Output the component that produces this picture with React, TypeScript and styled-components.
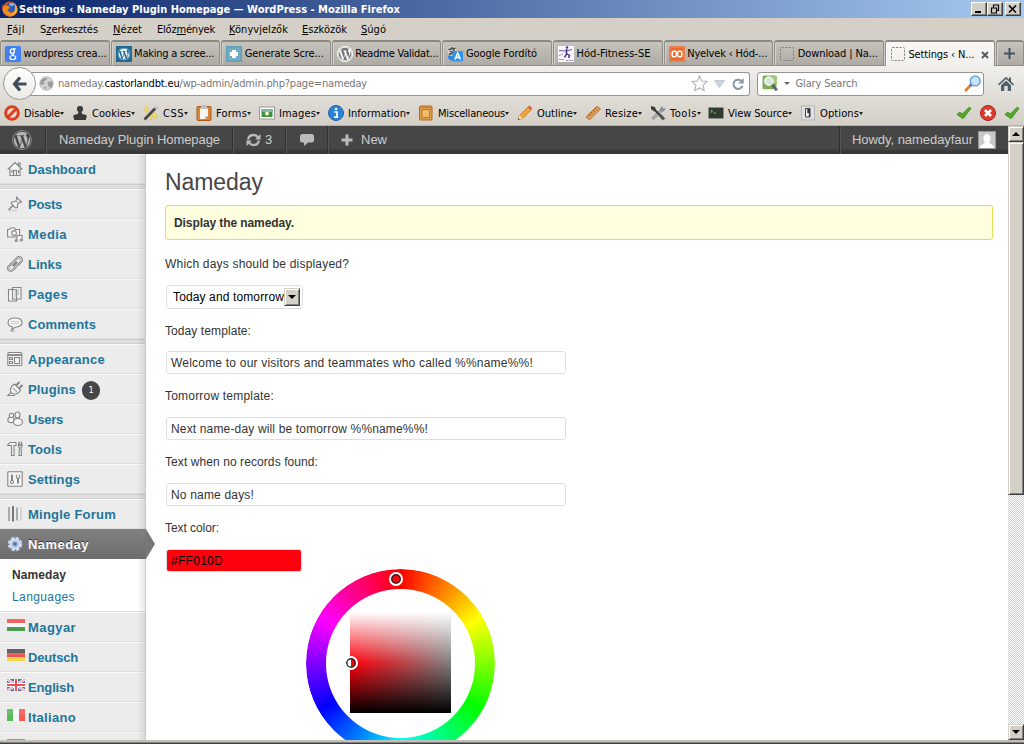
import React, { useLayoutEffect, useRef, useState } from 'react';
import styled, { createGlobalStyle, css } from 'styled-components';
import { FaWordpress } from 'react-icons/fa';

const UI = `Tahoma, "DejaVu Sans Condensed", "DejaVu Sans", sans-serif`;
const ARIAL = `Arial, "Liberation Sans", sans-serif`;

const Global = createGlobalStyle`
  * { box-sizing: border-box; }
  html, body { margin: 0; padding: 0; overflow: hidden; }
  body { font-family: ${ARIAL}; font-size: 12px; color: #333; }
  svg { display: block; flex: none; }
`;

/* ---------- text that spreads its letters over a given width ---------- */

const FitSpan = styled.span`
  display: inline-block;
  white-space: pre;
  flex: none;
`;

function Fit({ w, children }: { w: number; children: React.ReactNode }) {
  const ref = useRef<HTMLSpanElement>(null);
  const [spacing, setSpacing] = useState(0);
  useLayoutEffect(() => {
    const el = ref.current;
    if (!el) return;
    const count = (el.textContent || '').length;
    if (count > 1) setSpacing((w - el.getBoundingClientRect().width) / count);
  }, [w]);
  return (
    <FitSpan ref={ref} style={{ letterSpacing: `${spacing}px` }}>
      {children}
    </FitSpan>
  );
}

/* ---------- window chrome ---------- */

const Window = styled.div`
  width: 1024px;
  height: 744px;
  display: flex;
  flex-direction: column;
  overflow: hidden;
  background: #d4d0c8;
`;

const TitleBar = styled.header`
  height: 18px;
  flex: none;
  display: flex;
  align-items: center;
  padding: 0 3px 0 2px;
  background: linear-gradient(90deg, #0a246a, #a6caf0);
  color: #fff;
  font: bold 11px/18px ${UI};
`;

const TitleText = styled.div`
  flex: 1;
  padding: 1px 0 0 1px;
`;

const CaptionButton = styled.button<{ $gap?: number }>`
  width: 16px;
  height: 14px;
  margin: 0 0 0 ${(p) => p.$gap || 0}px;
  padding: 0;
  display: flex;
  align-items: center;
  justify-content: center;
  background: #d4d0c8;
  border: 1px solid;
  border-color: #fff #404040 #404040 #fff;
  box-shadow: inset -1px -1px #808080;
`;

const MenuBar = styled.nav`
  height: 22px;
  flex: none;
  display: grid;
  grid-template-columns: 33px 73px 44px 72px 73px 59px 60px;
  padding-left: 7px;
  color: #000;
  font: 11px/23px ${UI};
`;

const TabStrip = styled.div`
  height: 26px;
  flex: none;
  display: grid;
  grid-template-columns: repeat(8, 110.62px) 111px 28px;
  border-bottom: 1px solid #918f8b;
`;

const Tab = styled.div<{ $active?: boolean }>`
  height: ${(p) => (p.$active ? 26 : 25)}px;
  margin-right: 1px;
  padding-left: 4px;
  display: flex;
  align-items: center;
  gap: 2.5px;
  overflow: hidden;
  font: 11px/24px ${UI};
  color: #000;
  border: 1px solid #8f8d88;
  border-top: 2px solid #8b8984;
  border-bottom: 0;
  border-radius: 3px 3px 0 0;
  background: ${(p) => (p.$active ? 'linear-gradient(#f8f7f5, #f0efec)' : 'linear-gradient(#c6c3bd, #aeaba5)')};
  box-shadow: inset 1px 0 ${(p) => (p.$active ? '#fff' : '#d6d3cd')};
  & > span { padding-top: 1px; }
`;

const TabClose = styled.span`
  margin-left: 4px;
`;

const NewTab = styled(Tab)`
  justify-content: center;
  padding: 0;
  margin: 0;
`;

const NavBar = styled.div`
  height: 35px;
  flex: none;
  display: flex;
  align-items: center;
  padding: 0 10px 0 3px;
  background: linear-gradient(#f0efec, #dedbd5);
`;

const BackButton = styled.div`
  width: 33px;
  height: 33px;
  z-index: 1;
  display: flex;
  align-items: center;
  justify-content: center;
  flex: none;
  border: 1px solid #96948f;
  border-radius: 50%;
  background: linear-gradient(#fff, #eceae6);
`;

const Field = styled.div`
  height: 24px;
  display: flex;
  align-items: center;
  border: 1px solid #95938f;
  border-radius: 3px;
  background: #fff;
  font: 11px/22px ${UI};
  color: #777;
  & > span { padding-top: 1px; }
`;

const UrlField = styled(Field)`
  width: 726px;
  margin-left: -10px;
  padding: 0 4px 0 13px;
  gap: 4px;
  border-left: 0;
  b { font-weight: 400; color: #000; }
`;

const UrlTools = styled.div`
  margin-left: auto;
  display: flex;
  align-items: center;
  gap: 6px;
`;

const SearchField = styled(Field)`
  width: 227px;
  margin: 0 14px 0 7px;
  padding: 0 2px 0 4px;
  gap: 5px;
  & > :last-child { margin-left: auto; }
`;

const EngineMark = styled.i`
  width: 0;
  height: 0;
  flex: none;
  border: 3px solid transparent;
  border-top: 3px solid #666;
  border-bottom: 0;
`;

const ToolBar = styled.div`
  height: 25px;
  flex: none;
  display: grid;
  grid-template-columns: 68px 71px 53px 63px 69px 90px 99px 68px 65px 58px 92px 156px 24px 24px 19px;
  padding-left: 4px;
  align-items: center;
  background: linear-gradient(#dedbd5, #d4d0c8);
  border-bottom: 1px solid #b4b1aa;
  font: 11px/22px ${UI};
  color: #000;
`;

const Tool = styled.div`
  display: flex;
  align-items: center;
  gap: 4px;
  & > span { padding-top: 2px; }
`;

const DropMark = styled.i`
  width: 0;
  height: 0;
  margin-left: -4px;
  flex: none;
  border: 2.5px solid transparent;
  border-top: 3px solid #222;
  border-bottom: 0;
`;

/* ---------- WordPress page ---------- */

const Viewport = styled.div`
  height: 614px;
  flex: none;
  display: flex;
`;

const Page = styled.div`
  width: 1008px;
  height: 614px;
  display: flex;
  flex-direction: column;
  overflow: hidden;
  background: #fff;
`;

const AdminBar = styled.div`
  height: 28px;
  flex: none;
  display: flex;
  font: 13px/28px ${ARIAL};
  color: #ccc;
  background: linear-gradient(#464646 0 80%, #373737 92%);
`;

const AdminItem = styled.div<{ $w: number; $right?: boolean }>`
  width: ${(p) => p.$w}px;
  display: flex;
  align-items: center;
  padding-left: 12px;
  ${(p) =>
    p.$right
      ? css`margin-left: auto; border-left: 1px solid #2e2e2e; box-shadow: inset 1px 0 #555; gap: 5px;`
      : css`border-right: 1px solid #555; box-shadow: inset -1px 0 #333; gap: 4px;`}
`;

const LastAdminItem = styled(AdminItem)`
  border: 0;
  box-shadow: none;
  gap: 8px;
`;

const Body = styled.div`
  flex: 1;
  min-height: 0;
  display: flex;
`;

const Sidebar = styled.nav`
  width: 146px;
  flex: none;
  display: flex;
  flex-direction: column;
  position: relative;
  background: #ececec;
  &::after {
    content: '';
    position: absolute;
    inset: 0 0 0 auto;
    width: 8px;
    border-right: 1px solid #c8c8c8;
    background: linear-gradient(90deg, transparent, rgba(0, 0, 0, 0.09));
  }
`;

const MenuItem = styled.div<{ $current?: boolean }>`
  height: 30px;
  flex: none;
  display: flex;
  align-items: center;
  padding-left: 7px;
  color: #21759b;
  font: bold 13px/28px ${ARIAL};
  border-top: 1px solid #f9f9f9;
  border-bottom: 1px solid #dfdfdf;
  ${(p) =>
    p.$current &&
    css`
      position: relative;
      z-index: 2;
      color: #fff;
      text-shadow: 0 -1px 0 #333;
      border-color: #808080 transparent #6d6d6d;
      background: linear-gradient(#808080, #6d6d6d);
      &::after {
        content: '';
        position: absolute;
        left: 146px;
        top: -1px;
        border: 15px solid transparent;
        border-width: 15px 0 15px 9px;
        border-left-color: #777;
      }
    `}
`;

const MenuName = styled.span`
  height: 28px;
  line-height: 30px;
`;

const MenuIcon = styled.span<{ $flag?: boolean }>`
  width: 21px;
  flex: none;
  ${(p) => p.$flag && css`padding-bottom: 4px;`}
`;

const Count = styled.span`
  width: 18px;
  height: 19px;
  margin: 2px 0 0 6px;
  border-radius: 10px;
  background: #464646;
  color: #fff;
  font: 9px/19px ${UI};
  text-align: center;
`;

const Separator = styled.div`
  height: 5px;
  flex: none;
  background: #dfdfdf;
  border-top: 1px solid #cfcfcf;
  border-bottom: 1px solid #d2d2d2;
`;

const SubMenu = styled.div`
  height: 53px;
  flex: none;
  padding: 5px 0 0 12px;
  background: #fff;
  border-bottom: 1px solid #dfdfdf;
  font: 12px/22px ${ARIAL};
  color: #21759b;
  b { color: #333; }
`;

const SubItem = styled.div`
  height: 22px;
`;

const Content = styled.main`
  flex: 1;
  min-width: 0;
  padding: 11px 15px 0 19px;
  display: flex;
  flex-direction: column;
  align-items: flex-start;
`;

const Heading = styled.h2`
  height: 34px;
  margin: 0 0 6px;
  font: 400 23px/34px ${ARIAL};
  color: #464646;
`;

const Notice = styled.div`
  align-self: stretch;
  height: 35px;
  padding-left: 8px;
  border: 1px solid #e6db55;
  border-radius: 3px;
  background: #ffffe0;
  font: bold 12px/34px ${ARIAL};
`;

const Label = styled.label<{ $h: number; $line: number }>`
  height: ${(p) => p.$h}px;
  line-height: ${(p) => p.$line}px;
`;

const Input = styled.div<{ $w: number; $bg?: string }>`
  width: ${(p) => p.$w}px;
  height: 23px;
  flex: none;
  margin-left: 1px;
  padding-left: 4px;
  border: 1px solid #dfdfdf;
  border-radius: 3px;
  background: ${(p) => p.$bg || '#fff'};
  color: ${(p) => (p.$bg ? '#000' : '#333')};
  line-height: 22px;
`;

const Select = styled(Input)`
  height: 24px;
  padding: 0 3px 0 6px;
  color: #000;
  display: flex;
  align-items: center;
  justify-content: space-between;
`;

const Bevel = styled.div<{ $h: number }>`
  width: 16px;
  height: ${(p) => p.$h}px;
  flex: none;
  display: flex;
  align-items: center;
  justify-content: center;
  background: #d4d0c8;
  border: 1px solid;
  border-color: #d4d0c8 #404040 #404040 #d4d0c8;
  box-shadow: inset 1px 1px #fff, inset -1px -1px #808080;
`;

const Caret = styled.i<{ $up?: boolean }>`
  width: 0;
  height: 0;
  border: 4px solid transparent;
  ${(p) => (p.$up ? css`border-top: 0; border-bottom-color: #000;` : css`border-bottom: 0; border-top-color: #000;`)}
`;

const Wheel = styled.div`
  width: 195px;
  height: 195px;
  flex: none;
  position: relative;
  margin: -6px 0 0 138px;
`;

const HueRing = styled.div`
  position: absolute;
  left: 3px;
  top: 3px;
  width: 189px;
  height: 189px;
  border-radius: 50%;
  background: conic-gradient(#f00, #ff0, #0f0, #0ff, #00f, #f0f, #f00);
  -webkit-mask: radial-gradient(circle, transparent 74px, #000 75px);
  mask: radial-gradient(circle, transparent 74px, #000 75px);
`;

const Shade = styled.div`
  position: absolute;
  left: 47px;
  top: 46px;
  width: 101px;
  height: 101px;
  background: linear-gradient(#fff, rgba(255, 255, 255, 0) 50%, rgba(0, 0, 0, 0) 50%, #000),
    linear-gradient(90deg, #ff010d, #808080);
`;

const Marker = styled.div<{ $x: number; $y: number; $half?: boolean }>`
  position: absolute;
  left: ${(p) => p.$x - 7.5}px;
  top: ${(p) => p.$y - 7}px;
  width: 14px;
  height: 14px;
  border: 2px solid #fff;
  border-radius: 50%;
  box-shadow: inset 0 0 0 1.5px #222;
  background: ${(p) => (p.$half ? 'linear-gradient(90deg, #fff 50%, #ff010d 50%)' : '#ff010d')};
`;

const Scrollbar = styled.div`
  width: 16px;
  height: 614px;
  display: flex;
  flex-direction: column;
  background: repeating-conic-gradient(#d4d0c8 0 25%, #fff 0 50%) 0 0 / 2px 2px;
`;

const Spacer = styled.div`
  flex: 1;
`;

const BottomEdge = styled.div`
  height: 4px;
  flex: none;
  border-top: 2px solid #c4c0b9;
  background: linear-gradient(#808080 50%, #404040 50%);
`;

/* ---------- icons ---------- */

const Svg = ({ s = 16, children }: { s?: number; children: React.ReactNode }) => (
  <svg width={s} height={s} viewBox="0 0 16 16" fill="none">{children}</svg>
);

const Firefox = () => (
  <Svg>
    <circle cx="8" cy="8" r="7.6" fill="#d95a12" />
    <circle cx="8.6" cy="6.6" r="5.2" fill="#2f5fae" />
    <path d="M7 3q3-2 6 0l-2 2-3 0z" fill="#7db3e8" />
    <path d="M.8 3L1.8 6 4 4.4 6.6 5 8 7 5.4 8.6 7 11q3 1.2 5-.6 2.6-3 .6-7Q17 7 15 11.5 12 16 7 15.6 1 14 .4 8z" fill="#f08a1c" />
    <path d="M13 3q3 4 1 8-2 3.6-6 3.8 5-2 5.400-6z" fill="#fbd043" />
  </Svg>
);
const GoogleG = () => (
  <Svg>
    <rect width="16" height="16" rx="1.500" fill="#4080f0" />
    <ellipse cx="7.400" cy="5.200" rx="2" ry="2.300" stroke="#fff" strokeWidth="1.400" />
    <ellipse cx="7.800" cy="11.500" rx="2.900" ry="2" stroke="#fff" strokeWidth="1.200" />
    <path d="M8 2.700h3M7.500 7.800l1.300 1.600" stroke="#fff" strokeWidth="1.100" />
  </Svg>
);
const WpTile = () => (
  <Svg><rect width="16" height="16" fill="#1f6a93" /><g transform="translate(1.500 1.500)"><FaWordpress size={13} color="#e8f2f7" /></g></Svg>
);
const Cross = () => (
  <Svg>
    <rect width="16" height="16" fill="#5f9fb8" /><rect x="1.500" y="1.500" width="13" height="13" fill="#72adc4" />
    <path d="M6 4h4v2h2v4h-2v2H6v-2H4V6h2z" fill="#fff" />
  </Svg>
);
const WpRound = () => (
  <Svg><circle cx="8" cy="8" r="8" fill="#fff" /><g transform="translate(.5 .5)"><FaWordpress size={15} color="#777" /></g></Svg>
);
const Translate = () => (
  <Svg>
    <path d="M0 1.500L8.500 0l2 9L2 10.500z" fill="#cfcfcf" /><path d="M1.500 3.500l7-1.200M5 1v2.500M2 8.500q4.500-1 5.300-5M3 5l5 3.500" stroke="#4a4a4a" strokeWidth="1.400" />
    <path d="M.5 9.500q.5 5 6 5.500v-5z" fill="#2d87dc" />
    <rect x="5.500" y="5" width="10.500" height="10.500" rx="1" fill="#3094e8" /><path d="M8 13.500l2.700-6.500 2.700 6.500M9 11.500h3.500" stroke="#fff" strokeWidth="1.500" />
  </Svg>
);
const Fitness = () => (
  <Svg>
    <rect width="16" height="16" fill="#f7f6fa" />
    <circle cx="9" cy="1.500" r="1.200" fill="#44348a" />
    <path d="M1 4.500l7 .5 6-1.500" stroke="#6a5ca3" strokeWidth="1.200" /><path d="M8.500 3v5l-2 3.500M8.500 7.500l3 2-1 2.500" stroke="#44348a" strokeWidth="1.500" />
    <path d="M1 9.500l4-1.500M1 13.500h5M8 14.500h7" stroke="#8a83b5" strokeDasharray="2 .8" />
  </Svg>
);
const Xampp = () => (
  <Svg>
    <rect width="16" height="16" rx="1.500" fill="#e8692b" /><rect x="1" y="1" width="14" height="14" rx="1" stroke="#f2a077" strokeWidth=".8" />
    <path d="M8 8L6.400 5.200H4.500Q3.300 5.200 3.300 6.500v3q0 1.300 1.200 1.300h1.900zM8 8l1.600-2.800h1.900q1.200 0 1.200 1.300v3q0 1.300-1.200 1.300H9.600z" stroke="#fff" strokeWidth="1.600" />
  </Svg>
);
const Blank = () => (
  <Svg><rect x="1.500" y="1.500" width="13" height="13" rx="1" stroke="#84827e" strokeDasharray="2.200 1.300" /></Svg>
);
const BackArrow = () => (
  <svg width="18" height="16" viewBox="0 0 18 16" fill="none"><path d="M9 1.500L3.500 8 9 14.500M4 8h11.500" stroke="#3f4d5c" strokeWidth="3.200" /></svg>
);
const Globe = () => (
  <Svg s={15}>
    <circle cx="8" cy="8" r="7.200" fill="#d4d4d4" stroke="#aaa" strokeWidth=".8" />
    <path d="M2 5l3-3 4 .5-1 2-3 1 1 2-2 2-3-1zM9 7l4-2 2 3-2 5-3-2zM5 11l3 1-1 3z" fill="#9c9c9c" />
  </Svg>
);
const Star = () => (
  <Svg s={17}><path d="M8 .9l2.100 4.700 5 .5-3.700 3.500 1 5.200L8 12.200l-4.400 2.600 1-5.200L.9 6.100l5-.5z" fill="#fbfbfb" stroke="#b4b4b4" /></Svg>
);
const Down = () => <svg width="11" height="8" viewBox="0 0 11 8"><path d="M.5.500h10L5.500 7.500z" fill="#cdd4df" stroke="#b1bac8" strokeWidth=".7" /></svg>;
const Reload = () => (
  <Svg s={14}><path d="M11.500 4.200A5.300 5.300 0 1 0 13.200 10" stroke="#8795a8" strokeWidth="2.300" /><path d="M14.500 1v6.500H8.300z" fill="#8795a8" /></Svg>
);
const Glary = () => (
  <Svg s={17}>
    <rect x=".5" y=".5" width="13" height="13" rx="1.500" fill="#7cae55" /><path d="M10 1h4v8l-4-2z" fill="#9fca78" />
    <circle cx="6.500" cy="5.800" r="3.900" fill="#d5e6dc" stroke="#f4f7ef" strokeWidth="1.300" /><path d="M9.500 9l4.500 5.500" stroke="#5c6470" strokeWidth="2.600" />
  </Svg>
);
const Magnifier = () => (
  <Svg s={17}>
    <path d="M7 9L1 15" stroke="#e07d2c" strokeWidth="2.500" /><path d="M7.500 8.500l-2 2" stroke="#5879a8" strokeWidth="2.500" />
    <circle cx="10.600" cy="5.600" r="4.600" fill="#c4e5fb" stroke="#6c9fdc" strokeWidth="1.400" />
  </Svg>
);
const Home = () => (
  <Svg s={16}><path d="M8 .8L0 8.300l1 1.200 7-6.500 7 6.500 1-1.200-3-2.900V1.500h-2v2zM3 9.300L8 4.700l5 4.600V15H9.700v-5H6.300v5H3z" fill="#525f6d" /></Svg>
);
const Disable = () => (
  <Svg><circle cx="8" cy="8" r="6.300" fill="#f8d8cf" stroke="#d9401f" strokeWidth="3" /><path d="M3.500 12.500l9-9" stroke="#d9401f" strokeWidth="3" /></Svg>
);
const Stamp = () => (
  <Svg><path d="M8 1a3 3 0 0 0-3 3.300q0 1.500 1.300 2.700Q7 9 3 9.500Q1 10 1 12.500h14Q15 10 13 9.500 9 9 9.700 7 11 5.800 11 4.300A3 3 0 0 0 8 1zM2 12.500h12V15H2z" fill="#3b3b3b" /></Svg>
);
const Wand = () => (
  <Svg>
    <path d="M3.500 1l1 2.500L7 4.500l-2.500 1-1 2.500-1-2.500L0 4.500l2.500-1zM12 7l1 2.500 2.500 1-2.500 1-1 2.500-1-2.500-2.500-1 2.500-1zM8 9l.8 2 2 .8-2 .8L8 15l-.8-2.400-2-.8 2-.8z" fill="#f4dc5a" stroke="#e0b92e" strokeWidth=".4" />
    <path d="M1.500 14.500L14 1.500" stroke="#444" strokeWidth="2.600" /><path d="M12 3.500L14.300 1.200" stroke="#ddd" strokeWidth="2.400" />
  </Svg>
);
const Clipboard = () => (
  <Svg><rect x="1" y="1.500" width="14" height="14" rx="1" fill="#d6853b" stroke="#a9581a" /><path d="M4 3.500h8V11l-3 3H4z" fill="#faf8f3" /><rect x="5" y="0" width="6" height="4" rx="1" fill="#c3c0ba" /><path d="M12 11l-3 3v-3z" fill="#bbb" /></Svg>
);
const Picture = () => (
  <Svg><rect x=".5" y="2" width="15" height="12" fill="#fff" stroke="#999" /><rect x="2.500" y="4" width="11" height="8" fill="#3e9241" /><path d="M2.500 4h11v3h-11z" fill="#79b8a0" /><circle cx="8" cy="8.500" r="2" fill="#f3f0c6" /></Svg>
);
const Info = () => (
  <Svg><circle cx="8" cy="8" r="7.500" fill="#2c82d6" stroke="#1c62ac" /><circle cx="8" cy="4" r="1.300" fill="#fff" /><path d="M6.300 7H9v5.200M6 12.200h4.200" stroke="#fff" strokeWidth="1.700" /></Svg>
);
const Box = () => (
  <Svg><rect x="1.500" y="1" width="12.500" height="14" rx="1" fill="#e3a04b" stroke="#b06a1c" /><rect x="4" y="4.500" width="7.500" height="8" fill="#f1bb70" stroke="#b9772a" /><path d="M2.500 2.500h11" stroke="#c4802f" /></Svg>
);
const Pencil = () => (
  <Svg><path d="M1 15l1.500-4.500L11 2l3 3-8.500 8.500z" fill="#f0a63f" stroke="#bf7321" strokeWidth=".8" /><path d="M11 2l1.500-1.500 3 3L14 5z" fill="#e0534a" /><path d="M1 15l1.500-4.500 3 3z" fill="#f3dfc0" /><path d="M1 15l.6-1.800 1.200 1.200z" fill="#333" /></Svg>
);
const Ruler = () => (
  <Svg><path d="M1 12L12 1l3.500 3L4.500 15z" fill="#dc9a57" stroke="#ad6b2e" strokeWidth=".8" /><path d="M4 9l1.500 1.500M6 7l1.500 1.500M8 5l1.500 1.500M10 3l1.500 1.500" stroke="#8e5420" /></Svg>
);
const Wrench = () => (
  <Svg>
    <path d="M2.500 14L12 4.500" stroke="#7e868a" strokeWidth="3" /><path d="M2.500 14L12 4.500" stroke="#b5babd" strokeWidth="1.400" />
    <path d="M10.200 5.800Q9.500 3 12.500 1l.3 2.200 1.500.5 1-1.200q.5 3.500-3 4.300z" fill="#888f93" />
    <path d="M3 3l10 10.500" stroke="#3c3c3c" strokeWidth="2" /><path d="M1 1l4 1 1 3.500-2 1L1 4z" fill="#3c3c3c" /><path d="M10 10l4 4.500" stroke="#555" strokeWidth="3.200" />
  </Svg>
);
const Terminal = () => (
  <Svg><rect x=".5" y="2.500" width="15" height="11" rx="1" fill="#303a31" stroke="#858b8a" /><path d="M2.500 5l2 1.200-2 1.200M5.500 8H8" stroke="#6bd56b" strokeWidth=".9" /></Svg>
);
const Switch = () => (
  <Svg><rect x="1.500" y="1" width="13" height="14" fill="#dedfe0" stroke="#b2b5b8" /><path d="M5.500 3.500h4.500V12H5.500z" fill="#f5f5f5" stroke="#444" /><path d="M7.300 3.500h2.700V12H8.800V8H7.300z" fill="#333" /></Svg>
);
const Check = () => (
  <Svg><path d="M1 9.500L3.500 7l3 2L13 2.300l2 1L7 13.700z" fill="#54ac26" stroke="#39801a" strokeWidth=".8" /></Svg>
);
const Stop = () => (
  <Svg><circle cx="8" cy="8" r="7.500" fill="#e03a30" stroke="#a91f1a" /><path d="M5 5l6 6M11 5l-6 6" stroke="#fff" strokeWidth="2.700" /></Svg>
);

const gray = { stroke: '#858585', strokeWidth: 1.1, fill: '#f5f5f5' };
const G = (p: { children: React.ReactNode }) => <Svg><g {...gray}>{p.children}</g></Svg>;

const MenuIcons: Record<string, React.ReactNode> = {
  Dashboard: <G><path d="M3 7.500V14.500h10V7.500M.7 8.500L8 1.500l7.300 7M11.500 4.500V2h1.500v4M6.500 14V9.500h3V14M5 9v3M11.500 9v3" /></G>,
  Posts: <G><path d="M2 14.500h8" stroke="#ccc" /><path d="M6.500 9L1.500 14" strokeWidth="1.500" /><path d="M9.500 1.200l5 4.800-2 .4-2.200 2.400.2 2.700-2 .3-4.300-4.500.8-1.600 2.700.1L9.700 3.500z" /><path d="M9 4.500l2.500 2.500" stroke="#aaa" /></G>,
  Media: <G><path d="M.6 3.500h2l1-1.500h4l1 1.500h4V11h-12z" /><circle cx="7" cy="7" r="2.400" /><path d="M10 15V9.500h5V14" /><circle cx="9.300" cy="14.500" r="1" /><circle cx="14.300" cy="14" r="1" /></G>,
  Links: <Svg><g transform="rotate(-45 8 8)" fill="none" stroke="#7d7d7d"><rect x="-.5" y="5.300" width="9" height="5.400" rx="2.700" strokeWidth="2.200" /><rect x="7.500" y="5.300" width="9" height="5.400" rx="2.700" strokeWidth="2.200" /><rect x="-.5" y="5.300" width="9" height="5.400" rx="2.700" stroke="#eee" strokeWidth=".7" /><rect x="7.500" y="5.300" width="9" height="5.400" rx="2.700" stroke="#eee" strokeWidth=".7" /><path d="M5 8h6" strokeWidth="1.500" /></g></Svg>,
  Pages: <G><path d="M1.500 3.500h8v11.500h-8zM5.500 1.500h8.500v11.500H5.500z" /><path d="M7.500 4h4.500M7.500 6h4.500M7.500 8h4.500M7.500 10h3" stroke="#aaa" /></G>,
  Comments: <G><path d="M4.500 15l1-4Q1 10 1 6.500 1 2 8 2t7 4.500q0 4.500-7 4.700z" /><path d="M4 5.500h8M4 7.500h8" stroke="#ccc" /><path d="M3 15.300h5" stroke="#bbb" /></G>,
  Appearance: <G><rect x=".8" y="1.500" width="14" height="13" rx="1" /><path d="M1 4h14" strokeWidth="1.800" /><rect x="7.500" y="6.500" width="5" height="6" /><path d="M2.500 6.500h3v2h-3zM2.500 10.500h3v2h-3z" /></G>,
  Plugins: <G><path d="M4 11.500L.8 14.500H8" /><path d="M9 4.500L12.500 1M12 7.500L15.500 4" strokeWidth="2" /><path d="M7.500 3l6 6q-2 4-6 4Q3.500 13 3.500 8.500q.5-3.500 4-5.500z" /><path d="M6 7l4 4" stroke="#aaa" /></G>,
  Users: <G><circle cx="4.500" cy="4.500" r="2.200" /><ellipse cx="4" cy="9" rx="3.200" ry="2.700" /><ellipse cx="10.500" cy="4" rx="2.500" ry="3" /><ellipse cx="11" cy="11" rx="4.500" ry="3.500" /></G>,
  Tools: <G><path d="M.5 4.500Q2 1.300 4 1.500h5v3H7V14.500H4.500V4.500H3zM12 1.500q-1 2-.5 4l1 1-.5 8h2.500l-.5-8 1-1q.5-2-.8-4v3h-1.500z" /></G>,
  Settings: <G><rect x=".8" y=".8" width="14.400" height="14.400" rx=".5" /><path d="M5 3.500v7M11 7v5.500" strokeWidth="2" /><circle cx="5" cy="11" r="1.500" /><circle cx="11" cy="5.500" r="1.800" /><path d="M11 3v2" stroke="#fff" strokeWidth="1.500" /></G>,
  'Mingle Forum': <Svg><path d="M2 1v14" stroke="#aaa" strokeWidth="2" /><path d="M6 0v15.500" stroke="#777" strokeWidth="2" /><path d="M10 1.500V14.500" stroke="#aaa" strokeWidth="2" /><path d="M14 1v13.500" stroke="#d4d4d4" strokeWidth="2" /></Svg>,
  Nameday: <Svg><circle cx="8" cy="8" r="5.800" stroke="#c3d2ef" strokeWidth="3" strokeDasharray="3.200 1.350" /><circle cx="8" cy="8" r="4.900" fill="#b8c9e8" stroke="#dfe8f8" strokeWidth="1.300" /><circle cx="8" cy="8" r="1.900" fill="#5f6d8d" stroke="#7f93c0" /></Svg>,
};

const Stripes = ({ c, vertical }: { c: string[]; vertical?: boolean }) => (
  <svg width="18" height="12">
    {c.map((fill, i) =>
      vertical ? <rect key={i} x={i * 6} width="6" height="12" fill={fill} /> : <rect key={i} y={i * 4} width="18" height="4" fill={fill} />,
    )}
    <path d="M0 0h18v6H0z" fill="#fff" opacity=".1" />
  </svg>
);

const Flags: Record<string, React.ReactNode> = {
  Magyar: <Stripes c={['#f25450', '#f7f7f7', '#4c9c50']} />,
  Deutsch: <Stripes c={['#505050', '#f0524c', '#f6d64c']} />,
  English: (
    <svg width="18" height="12">
      <rect width="18" height="12" fill="#5f6fae" />
      <path d="M0 0l18 12M18 0L0 12" stroke="#fff" strokeWidth="2.600" /><path d="M0 0l18 12M18 0L0 12" stroke="#e4656c" strokeWidth=".8" />
      <path d="M9 0v12M0 6h18" stroke="#fff" strokeWidth="4" /><path d="M9 0v12M0 6h18" stroke="#ec4f55" strokeWidth="2" />
    </svg>
  ),
  Italiano: <Stripes vertical c={['#57bb5b', '#f7f7f7', '#f65a57']} />,
  '': <Stripes c={['#e8605c', '#f6d64c', '#e8605c']} />,
};

/* ---------- data ---------- */

const menus: [string, string, string, number][] = [
  ['', 'F', 'ájl', 18],
  ['S', 'z', 'erkesztés', 58],
  ['', 'N', 'ézet', 29],
  ['Előz', 'm', 'ények', 58],
  ['', 'K', 'önyvjelzők', 59],
  ['', 'E', 'szközök', 45],
  ['', 'S', 'úgó', 25],
];

const tabs: [React.ReactNode, string, number][] = [
  [<GoogleG />, 'wordpress crea...', 83],
  [<WpTile />, 'Making a scree...', 80],
  [<Cross />, 'Generate Scre...', 79],
  [<WpRound />, 'Readme Validat...', 83],
  [<Translate />, 'Google Fordító', 71],
  [<Fitness />, 'Hód-Fitness-SE', 74],
  [<Xampp />, 'Nyelvek ‹ Hód-...', 80],
  [<Blank />, 'Download | Na...', 80],
];

const tools: [React.ReactNode, string, number][] = [
  [<Disable />, 'Disable', 36], [<Stamp />, 'Cookies', 39], [<Wand />, 'CSS', 21], [<Clipboard />, 'Forms', 31],
  [<Picture />, 'Images', 37], [<Info />, 'Information', 58], [<Box />, 'Miscellaneous', 67], [<Pencil />, 'Outline', 36],
  [<Ruler />, 'Resize', 33], [<Wrench />, 'Tools', 27], [<Terminal />, 'View Source', 60], [<Switch />, 'Options', 39],
];

const groups: [string, number][][] = [
  [['Dashboard', 68]],
  [['Posts', 34], ['Media', 39], ['Links', 34], ['Pages', 40], ['Comments', 68]],
  [['Appearance', 77], ['Plugins', 48], ['Users', 35], ['Tools', 34], ['Settings', 52]],
  [['Mingle Forum', 88], ['Nameday', 61]],
];

const languages: [string, number][] = [['Magyar', 48], ['Deutsch', 50], ['English', 46], ['Italiano', 48], ['', 0]];

const fields: [string, number, string, number, number, number][] = [
  ['Today template:', 86, 'Welcome to our visitors and teammates who called %%name%%!', 362, 42, 44],
  ['Tomorrow template:', 109, 'Next name-day will be tomorrow %%name%%!', 257, 43, 44],
  ['Text when no records found:', 153, 'No name days!', 83, 43, 44],
];

export default function App() {
  return (
    <Window>
      <Global />
      <TitleBar>
        <Firefox />
        <TitleText><Fit w={381}>Settings ‹ Nameday Plugin Homepage — WordPress - Mozilla Firefox</Fit></TitleText>
        <CaptionButton><svg width="10" height="8"><path d="M1 6h6v2H1z" /></svg></CaptionButton>
        <CaptionButton><svg width="10" height="10" fill="none" stroke="#000"><path d="M3 1h6M3.500 1v3M8.500 1v5.500H7M1 4h6M1.500 4v5h5V4" strokeWidth="1.200" /></svg></CaptionButton>
        <CaptionButton $gap={2}><svg width="10" height="8"><path d="M1 .5l7 7M8 .5l-7 7" stroke="#000" strokeWidth="1.600" /></svg></CaptionButton>
      </TitleBar>
      <MenuBar>
        {menus.map(([before, key, after, w]) => (
          <div key={key + after}><Fit w={w}>{before}<u>{key}</u>{after}</Fit></div>
        ))}
      </MenuBar>
      <TabStrip>
        {tabs.map(([icon, text, w]) => <Tab key={text}>{icon}<Fit w={w}>{text}</Fit></Tab>)}
        <Tab $active>
          <Blank /><Fit w={66}>Settings ‹ N...</Fit>
          <TabClose><svg width="8" height="8"><path d="M1 1l6 6M7 1L1 7" stroke="#555" strokeWidth="1.800" /></svg></TabClose>
        </Tab>
        <NewTab><svg width="11" height="11"><path d="M5.500 0v11M0 5.500h11" stroke="#445160" strokeWidth="2" /></svg></NewTab>
      </TabStrip>
      <NavBar>
        <BackButton><BackArrow /></BackButton>
        <UrlField>
          <Globe />
          <Fit w={309}>nameday.<b>castorlandbt.eu</b>/wp-admin/admin.php?page=nameday</Fit>
          <UrlTools><Star /><Down /><Reload /></UrlTools>
        </UrlField>
        <SearchField>
          <Glary /><EngineMark /><Fit w={62}>Glary Search</Fit><Magnifier />
        </SearchField>
        <Home />
      </NavBar>
      <ToolBar>
        {tools.map(([icon, text, w]) => <Tool key={text}>{icon}<Fit w={w}>{text}</Fit><DropMark /></Tool>)}
        <Check /><Stop /><Check />
      </ToolBar>
      <Viewport>
        <Page>
          <AdminBar>
            <AdminItem $w={47}><FaWordpress size={20} color="#b5b5b5" /></AdminItem>
            <AdminItem $w={187}><Fit w={161}>Nameday Plugin Homepage</Fit></AdminItem>
            <AdminItem $w={53}>
              <svg width="15" height="14" viewBox="0 0 15 14" fill="none" stroke="#bbb" strokeWidth="2.300"><path d="M2 6.500Q3 2 7.500 2q3 0 4.500 2.500M13 7.500Q12 12 7.500 12q-3 0-4.500-2.500" /><path d="M14.500 1v5.500H9zM.5 13V7.500H6z" fill="#bbb" stroke="none" /></svg>
              <Fit w={9}>3</Fit>
            </AdminItem>
            <AdminItem $w={42}><svg width="16" height="14" viewBox="0 0 16 14"><path d="M3.500 1h9q2.500 0 2.500 2.500V7q0 2.500-2.500 2.500H9L5 13V9.500H3.500Q1 9.500 1 7V3.500Q1 1 3.500 1z" fill="#bbb" /></svg></AdminItem>
            <LastAdminItem $w={80}><svg width="12" height="12"><path d="M6 .5v11M.5 6h11" stroke="#bbb" strokeWidth="3" /></svg><Fit w={26}>New</Fit></LastAdminItem>
            <AdminItem $w={169} $right>
              <Fit w={121}>Howdy, namedayfaur</Fit>
              <svg width="18" height="18"><rect x=".5" y=".5" width="17" height="17" fill="#c9c9c9" stroke="#999" /><path d="M2 17q0-3 5-5Q5 9 5.500 6 6.500 3 9 3t3.500 3Q13 9 11 12q5 2 5 5z" fill="#fff" /></svg>
            </AdminItem>
          </AdminBar>
          <Body>
            <Sidebar>
              {groups.map((group, i) => (
                <React.Fragment key={i}>
                  {i > 0 && <Separator />}
                  {group.map(([name, w]) => (
                    <MenuItem key={name} $current={name === 'Nameday'}>
                      <MenuIcon>{MenuIcons[name]}</MenuIcon>
                      <MenuName><Fit w={w}>{name}</Fit></MenuName>
                      {name === 'Plugins' && <Count>1</Count>}
                    </MenuItem>
                  ))}
                </React.Fragment>
              ))}
              <SubMenu>
                <SubItem><b><Fit w={54}>Nameday</Fit></b></SubItem>
                <SubItem><Fit w={63}>Languages</Fit></SubItem>
              </SubMenu>
              {languages.map(([name, w]) => (
                <MenuItem key={name}>
                  <MenuIcon $flag>{Flags[name]}</MenuIcon>
                  <MenuName><Fit w={w}>{name}</Fit></MenuName>
                </MenuItem>
              ))}
            </Sidebar>
            <Content>
              <Heading><Fit w={98}>Nameday</Fit></Heading>
              <Notice><Fit w={120}>Display the nameday.</Fit></Notice>
              <Label $h={45} $line={48}><Fit w={184}>Which days should be displayed?</Fit></Label>
              <Select $w={137}>
                <Fit w={111}>Today and tomorrow</Fit>
                <Bevel $h={18}><Caret /></Bevel>
              </Select>
              {fields.map(([label, lw, value, vw, h, line]) => (
                <React.Fragment key={label}>
                  <Label $h={h} $line={line}><Fit w={lw}>{label}</Fit></Label>
                  <Input $w={400}><Fit w={vw}>{value}</Fit></Input>
                </React.Fragment>
              ))}
              <Label $h={43} $line={44}><Fit w={54}>Text color:</Fit></Label>
              <Input $w={136} $bg="#ff010d"><Fit w={52}>#FF010D</Fit></Input>
              <Wheel>
                <HueRing />
                <Shade />
                <Marker $x={93.5} $y={12.5} />
                <Marker $x={48} $y={96.5} $half />
              </Wheel>
            </Content>
          </Body>
        </Page>
        <Scrollbar>
          <Bevel $h={16}><Caret $up /></Bevel>
          <Bevel $h={353} />
          <Spacer />
          <Bevel $h={16}><Caret /></Bevel>
        </Scrollbar>
      </Viewport>
      <BottomEdge />
    </Window>
  );
}
